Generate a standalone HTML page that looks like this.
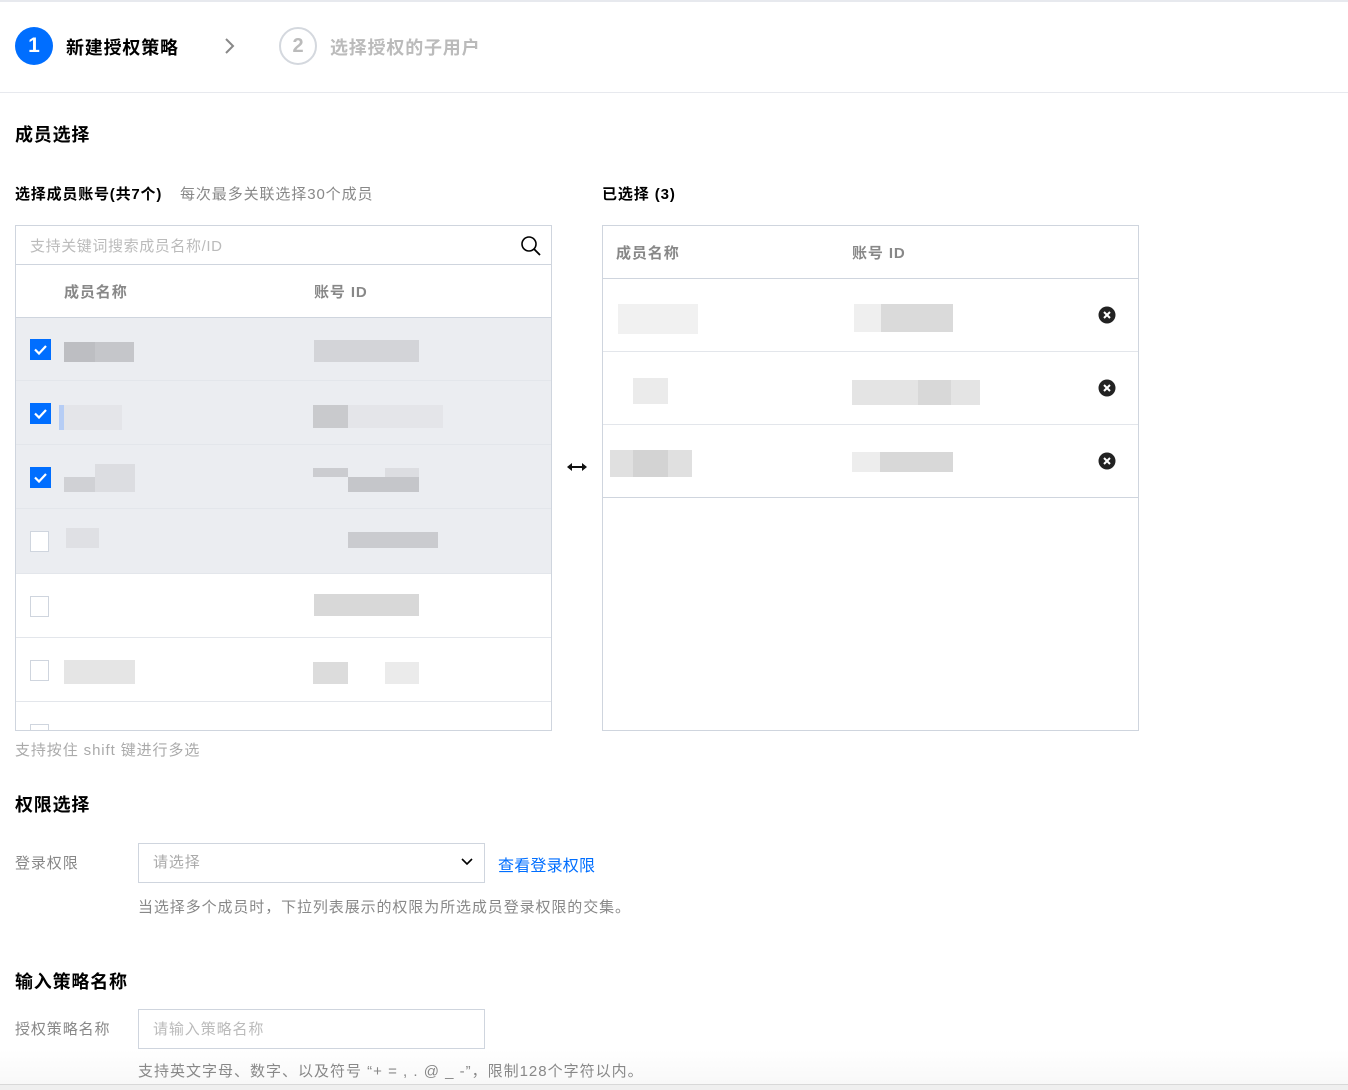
<!DOCTYPE html>
<html><head><meta charset="utf-8">
<style>
*{box-sizing:border-box;margin:0;padding:0}
body{width:1348px;height:1090px;overflow:hidden;background:#fff;font-family:"Liberation Sans","Noto Sans CJK SC",sans-serif;position:relative;color:#000}
.a{position:absolute}
.t{position:absolute;white-space:nowrap;letter-spacing:0.9px}
.b{position:absolute}
.cb{position:absolute;left:30px;width:21px;height:21px;border:1px solid #cfd5de;background:#fff}
.row{position:absolute;left:16px;width:535px;border-bottom:1px solid #e3e6eb}
.x{position:absolute;left:1098px;width:18px;height:18px}
</style></head><body>
<div class="a" style="left:0;top:0;width:1348px;height:2px;background:#e7e9ee"></div>
<div class="a" style="left:0;top:92px;width:1348px;height:1px;background:#e7e9ee"></div>
<div class="a" style="left:15px;top:27px;width:38px;height:38px;border-radius:50%;background:#006eff;color:#fff;font-size:21px;font-weight:bold;text-align:center;line-height:38px">1</div>
<div class="t" style="left:66px;top:34px;font-size:18px;font-weight:bold;color:#000;letter-spacing:0.8px">新建授权策略</div>
<svg class="a" style="left:222px;top:36px" width="16" height="20"><path d="M4 3 L11 10 L4 17" stroke="#888" stroke-width="2" fill="none"/></svg>
<div class="a" style="left:279px;top:27px;width:38px;height:38px;border-radius:50%;border:2px solid #d4d8de;color:#bbb;font-size:20px;font-weight:bold;text-align:center;line-height:34px">2</div>
<div class="t" style="left:330px;top:34px;font-size:18px;font-weight:bold;color:#bbb;letter-spacing:0.8px">选择授权的子用户</div>

<div class="t" style="left:15px;top:121px;font-size:18px;font-weight:bold;letter-spacing:0.8px">成员选择</div>
<div class="t" style="left:15px;top:183px;font-size:15px;font-weight:bold;letter-spacing:0.8px">选择成员账号(共7个)</div>
<div class="t" style="left:180px;top:183px;font-size:15px;color:#888">每次最多关联选择30个成员</div>
<div class="t" style="left:602px;top:183px;font-size:15px;font-weight:bold">已选择 (3)</div>

<div class="a" style="left:15px;top:225px;width:537px;height:506px;border:1px solid #cfd5de;overflow:hidden">
 <div class="a" style="left:0;top:0;width:535px;height:39px;border-bottom:1px solid #cfd5de"></div>
 <div class="t" style="left:14px;top:9px;font-size:15px;color:#bbb;letter-spacing:0.6px">支持关键词搜索成员名称/ID</div>
 <svg class="a" style="left:504px;top:9px" width="22" height="22"><circle cx="9" cy="9" r="7" stroke="#000" stroke-width="1.6" fill="none"/><path d="M14 14 L20 20" stroke="#000" stroke-width="1.8"/></svg>
 <div class="a" style="left:0;top:40px;width:535px;height:52px;border-bottom:1px solid #cfd5de"></div>
 <div class="t" style="left:48px;top:55px;font-size:15px;font-weight:bold;color:#888">成员名称</div>
 <div class="t" style="left:298px;top:55px;font-size:15px;font-weight:bold;color:#888">账号 ID</div>
 <div class="a" style="left:0;top:92px;width:535px;height:256px;background:#ebedf1"></div>
</div>
<div class="row" style="top:380px"></div>
<div class="row" style="top:444px"></div>
<div class="row" style="top:508px"></div>
<div class="row" style="top:573px"></div>
<div class="row" style="top:637px"></div>
<div class="row" style="top:701px"></div>
<svg class="a" style="left:30px;top:339px" width="21" height="21"><rect width="21" height="21" fill="#006eff"/><path d="M5 10.5 L9 14.5 L16 7" stroke="#fff" stroke-width="2.2" fill="none"/></svg>
<svg class="a" style="left:30px;top:403px" width="21" height="21"><rect width="21" height="21" fill="#006eff"/><path d="M5 10.5 L9 14.5 L16 7" stroke="#fff" stroke-width="2.2" fill="none"/></svg>
<svg class="a" style="left:30px;top:467px" width="21" height="21"><rect width="21" height="21" fill="#006eff"/><path d="M5 10.5 L9 14.5 L16 7" stroke="#fff" stroke-width="2.2" fill="none"/></svg>
<div class="cb" style="top:531px;width:19px"></div>
<div class="cb" style="top:596px;width:19px"></div>
<div class="cb" style="top:660px;width:19px"></div>
<div class="a" style="left:30px;top:724px;width:19px;height:6px;border:1px solid #cfd5de;border-bottom:none"></div>
<div class="b" style="left:64px;top:342px;width:31px;height:20px;background:#bdbec2"></div>
<div class="b" style="left:95px;top:342px;width:39px;height:20px;background:#c5c6ca"></div>
<div class="b" style="left:314px;top:340px;width:105px;height:22px;background:#d3d4d8"></div>
<div class="b" style="left:59px;top:405px;width:5px;height:25px;background:#b6cdf5"></div>
<div class="b" style="left:64px;top:405px;width:58px;height:25px;background:#e4e5e9"></div>
<div class="b" style="left:313px;top:405px;width:35px;height:23px;background:#c9cacd"></div>
<div class="b" style="left:348px;top:405px;width:95px;height:23px;background:#e4e5e9"></div>
<div class="b" style="left:64px;top:477px;width:31px;height:15px;background:#d0d1d5"></div>
<div class="b" style="left:95px;top:464px;width:40px;height:28px;background:#dcdde1"></div>
<div class="b" style="left:313px;top:468px;width:35px;height:9px;background:#cbccd0"></div>
<div class="b" style="left:348px;top:477px;width:71px;height:15px;background:#c5c6ca"></div>
<div class="b" style="left:385px;top:468px;width:34px;height:9px;background:#dcdde1"></div>
<div class="b" style="left:66px;top:528px;width:33px;height:20px;background:#dfe0e4"></div>
<div class="b" style="left:348px;top:532px;width:90px;height:16px;background:#cacbcf"></div>
<div class="b" style="left:314px;top:594px;width:105px;height:22px;background:#d8d8d8"></div>
<div class="b" style="left:64px;top:660px;width:71px;height:24px;background:#e5e5e5"></div>
<div class="b" style="left:313px;top:662px;width:35px;height:22px;background:#dcdcdc"></div>
<div class="b" style="left:385px;top:662px;width:34px;height:22px;background:#ebebeb"></div>

<svg class="a" style="left:566px;top:461px" width="22" height="12"><path d="M4 6 H18" stroke="#111" stroke-width="2"/><path d="M1 6 L6 2 L6 10 Z M21 6 L16 2 L16 10 Z" fill="#111"/></svg>

<div class="a" style="left:602px;top:225px;width:537px;height:506px;border:1px solid #cfd5de"></div>
<div class="a" style="left:603px;top:278px;width:535px;height:1px;background:#cfd5de"></div>
<div class="a" style="left:603px;top:351px;width:535px;height:1px;background:#e3e6eb"></div>
<div class="a" style="left:603px;top:424px;width:535px;height:1px;background:#e3e6eb"></div>
<div class="a" style="left:603px;top:497px;width:535px;height:1px;background:#cfd5de"></div>
<div class="t" style="left:616px;top:242px;font-size:15px;font-weight:bold;color:#888">成员名称</div>
<div class="t" style="left:852px;top:242px;font-size:15px;font-weight:bold;color:#888">账号 ID</div>
<div class="b" style="left:618px;top:304px;width:80px;height:30px;background:#f1f1f1"></div>
<div class="b" style="left:854px;top:304px;width:99px;height:28px;background:#dadada"></div>
<div class="b" style="left:854px;top:304px;width:27px;height:28px;background:#efefef"></div>
<div class="b" style="left:633px;top:378px;width:35px;height:26px;background:#ebebeb"></div>
<div class="b" style="left:852px;top:380px;width:128px;height:25px;background:#e4e4e4"></div>
<div class="b" style="left:918px;top:380px;width:33px;height:25px;background:#d8d8d8"></div>
<div class="b" style="left:610px;top:450px;width:82px;height:27px;background:#e0e0e0"></div>
<div class="b" style="left:633px;top:450px;width:35px;height:27px;background:#d3d3d3"></div>
<div class="b" style="left:852px;top:452px;width:101px;height:20px;background:#d8d8d8"></div>
<div class="b" style="left:852px;top:452px;width:28px;height:20px;background:#ededed"></div>
<svg class="x" style="top:306px" viewBox="0 0 18 18"><circle cx="9" cy="9" r="8.5" fill="#222"/><path d="M6 6 L12 12 M12 6 L6 12" stroke="#fff" stroke-width="2"/></svg>
<svg class="x" style="top:379px" viewBox="0 0 18 18"><circle cx="9" cy="9" r="8.5" fill="#222"/><path d="M6 6 L12 12 M12 6 L6 12" stroke="#fff" stroke-width="2"/></svg>
<svg class="x" style="top:452px" viewBox="0 0 18 18"><circle cx="9" cy="9" r="8.5" fill="#222"/><path d="M6 6 L12 12 M12 6 L6 12" stroke="#fff" stroke-width="2"/></svg>

<div class="t" style="left:15px;top:739px;font-size:15px;color:#aaa">支持按住 shift 键进行多选</div>

<div class="t" style="left:15px;top:791px;font-size:18px;font-weight:bold;letter-spacing:0.8px">权限选择</div>
<div class="t" style="left:15px;top:852px;font-size:15px;color:#888">登录权限</div>
<div class="a" style="left:138px;top:843px;width:347px;height:40px;border:1px solid #cfd5de"></div>
<div class="t" style="left:153px;top:851px;font-size:15px;color:#aaa">请选择</div>
<svg class="a" style="left:461px;top:857px" width="12" height="10"><path d="M1 2 L6 7 L11 2" stroke="#000" stroke-width="1.6" fill="none"/></svg>
<div class="t" style="left:498px;top:852px;font-size:16px;color:#006eff;letter-spacing:0.2px">查看登录权限</div>
<div class="t" style="left:138px;top:896px;font-size:15px;color:#888">当选择多个成员时，下拉列表展示的权限为所选成员登录权限的交集。</div>

<div class="t" style="left:15px;top:968px;font-size:18px;font-weight:bold;letter-spacing:0.8px">输入策略名称</div>
<div class="t" style="left:15px;top:1018px;font-size:15px;color:#888">授权策略名称</div>
<div class="a" style="left:138px;top:1009px;width:347px;height:40px;border:1px solid #cfd5de"></div>
<div class="t" style="left:153px;top:1018px;font-size:15px;color:#bbb">请输入策略名称</div>
<div class="a" style="left:0;top:1050px;width:1348px;height:34px;background:linear-gradient(#fff,#f8f8f8)"></div>
<div class="t" style="left:138px;top:1060px;font-size:15px;color:#888;letter-spacing:1px">支持英文字母、数字、以及符号 “+ = , . @ _ -”，限制128个字符以内。</div>
<div class="a" style="left:0;top:1084px;width:1348px;height:1px;background:#d8d8d8"></div>
<div class="a" style="left:0;top:1085px;width:1348px;height:5px;background:#efefef"></div>
</body></html>
